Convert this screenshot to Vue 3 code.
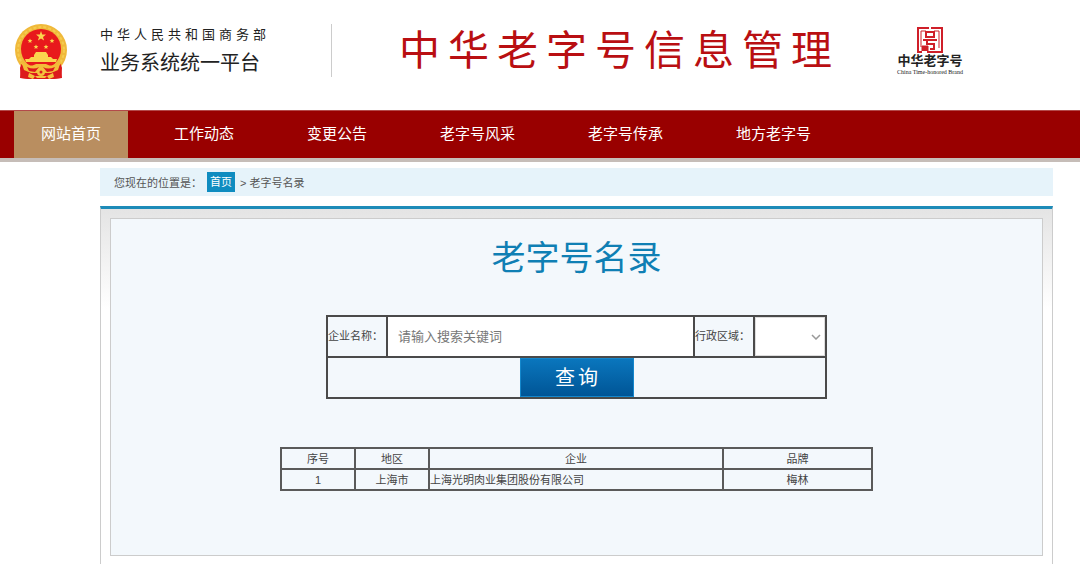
<script setup>
import { ref } from 'vue'

const nav = ['网站首页', '工作动态', '变更公告', '老字号风采', '老字号传承', '地方老字号']
const active = ref(0)
const keyword = ref('')
const region = ref('')
const rows = [{ id: 1, area: '上海市', company: '上海光明肉业集团股份有限公司', brand: '梅林' }]
</script>

<template>
  <div class="page">
    <header class="header">
      <svg class="emblem" viewBox="0 0 52 56" aria-hidden="true">
        <path d="M7 38 L5 44 L6 54 L14 55 L38 55 L46 54 L47 44 L45 38 Z" fill="#dc1a1c" />
        <circle cx="26" cy="26" r="26" fill="#f0b93a" />
        <circle cx="26" cy="26" r="23" fill="none" stroke="#f5cb50" stroke-width="2" stroke-dasharray="3 2" />
        <path d="M6 40 L5 54 L14 55 L38 55 L47 54 L46 40 L38 46 H14 Z" fill="#dc1a1c" />
        <circle cx="26" cy="25" r="20" fill="#e8191c" />
        <path d="M26 7 L27.2 10.5 L31 10.6 L28 12.9 L29.1 16.5 L26 14.4 L22.9 16.5 L24 12.9 L21 10.6 L24.8 10.5 Z" fill="#fbd54e" />
        <g fill="#fbd54e">
          <path id="star" d="M15 14.5 l.7 1.6 1.7.1 -1.3 1.1 .4 1.7 -1.5-.9 -1.5.9 .4-1.7 -1.3-1.1 1.7-.1Z" />
          <use href="#star" x="22" />
          <use href="#star" x="6" y="6" />
          <use href="#star" x="16" y="6" />
          <path d="M19 31 L21 28 H31 L33 31 V33 H36 L38 35 H42 L41 38 H11 L10 35 H14 L16 33 H19 Z" />
        </g>
        <path d="M6 37 C13 43 18 42 21 40 H31 C34 42 39 43 46 37 L43 46 L36 49 H16 L9 46 Z" fill="#f3bd39" />
        <path d="M12 43 Q19 46 24 43 L20 48 L14 47 Z M40 43 Q33 46 28 43 L32 48 L38 47 Z" fill="#dc1a1c" />
        <circle cx="26" cy="48" r="4" fill="#f4c23f" />
        <circle cx="26" cy="48" r="1.5" fill="#dc1a1c" />
        <path d="M14 49 L20 52 L18 55 L13 53 Z M38 49 L32 52 L34 55 L39 53 Z M20 52 H32 L30 54 H22 Z" fill="#f4c23f" />
      </svg>
      <div class="org">
        <span class="org-name">中华人民共和国商务部</span>
        <span class="org-platform">业务系统统一平台</span>
      </div>
      <div class="site-title">中华老字号信息管理</div>
      <div class="brand">
        <svg class="seal" viewBox="0 0 26 26" aria-hidden="true">
          <g fill="none" stroke="#cf1f29" stroke-width="2">
            <path d="M12 1 H1 V25 H5 M14 1 H25 V25 H10" />
            <path d="M9 4 H4 V20 M17 4 H22 V21" stroke-width="1" />
            <path d="M9 5 H17 V10 H9 Z M6 13 H20 M10 13 V17 H17 V22 H13" />
            <path d="M5 24 V19 H11 V24" fill="#cf1f29" stroke-width="1" />
          </g>
        </svg>
        <span class="brand-cn">中华老字号</span>
        <span class="brand-en">China Time-honored Brand</span>
      </div>
    </header>

    <nav class="nav">
      <a v-for="(item, i) in nav" :key="item" href="#" :class="{ active: i === active }" @click.prevent="active = i">{{ item }}</a>
    </nav>

    <main class="main">
      <div class="crumbs">
        <span>您现在的位置是：</span>
        <a href="#">首页</a>
        <span>&gt; 老字号名录</span>
      </div>

      <div class="frame">
        <section class="panel">
          <h1>老字号名录</h1>
          <form class="search" @submit.prevent>
            <label for="company">企业名称：</label>
            <input id="company" v-model="keyword" type="text" placeholder="请输入搜索关键词" />
            <label for="region">行政区域：</label>
            <div class="select-wrap">
              <select id="region" v-model="region">
                <option value=""></option>
                <option value="上海市">上海市</option>
              </select>
              <svg viewBox="0 0 10 6" aria-hidden="true"><path d="M1 1 L5 5 L9 1" fill="none" stroke="#999" stroke-width="1.5" /></svg>
            </div>
            <div class="actions"><button type="submit">查询</button></div>
          </form>

          <table class="results">
            <colgroup><col class="c-id" /><col class="c-area" /><col class="c-company" /><col class="c-brand" /></colgroup>
            <thead>
              <tr><th>序号</th><th>地区</th><th>企业</th><th>品牌</th></tr>
            </thead>
            <tbody>
              <tr v-for="r in rows" :key="r.id">
                <td>{{ r.id }}</td>
                <td>{{ r.area }}</td>
                <td class="left">{{ r.company }}</td>
                <td>{{ r.brand }}</td>
              </tr>
            </tbody>
          </table>
        </section>
      </div>
    </main>
  </div>
</template>

<style>
body {
  margin: 0;
  background: #fff;
}
</style>

<style scoped>
.page {
  font-family: "Liberation Sans", "Noto Sans CJK SC", sans-serif;
  font-size: 11px;
  color: #444;
}
.page * {
  box-sizing: border-box;
}
.header {
  display: flex;
  align-items: flex-start;
  height: 110px;
  padding: 24px 15px 0;
  white-space: nowrap;
}
.emblem {
  width: 52px;
  height: 56px;
  flex: none;
}
.org {
  display: flex;
  flex-direction: column;
  width: 232px;
  height: 53px;
  margin-left: 33px;
  border-right: 1px solid #ccc;
  color: #222;
}
.org-name {
  font-size: 13px;
  line-height: 22px;
  letter-spacing: 4px;
}
.org-platform {
  font-size: 20px;
  line-height: 34px;
}
.site-title {
  margin-left: 67px;
  font-size: 41px;
  line-height: 54px;
  letter-spacing: 8px;
  color: #b90f12;
}
.brand {
  display: flex;
  flex-direction: column;
  align-items: center;
  margin-left: 57px;
  padding-top: 3px;
  color: #222;
}
.seal {
  width: 26px;
  height: 26px;
}
.brand-cn {
  font-size: 13px;
  font-weight: 700;
  line-height: 16px;
}
.brand-en {
  font-family: "Liberation Serif", serif;
  font-size: 6px;
  line-height: 6px;
}
.nav {
  display: flex;
  gap: 19px;
  height: 52px;
  padding: 0 14px;
  background: #900;
  border-top: 1px solid #b34a4a;
  border-bottom: 4px solid #c6bdb8;
}
.nav a {
  padding: 0 27px;
  font-size: 15px;
  line-height: 46px;
  color: #fff;
  text-decoration: none;
  white-space: nowrap;
}
.nav a.active {
  background: #b98e60;
}
.main {
  margin: 6px 27px 0 100px;
}
.crumbs {
  display: flex;
  align-items: center;
  gap: 5px;
  height: 28px;
  padding-left: 14px;
  background: #e6f3fa;
  color: #555;
}
.crumbs a {
  padding: 0 3px;
  line-height: 20px;
  background: #0f8cc0;
  color: #fff;
  text-decoration: none;
}
.frame {
  margin-top: 10px;
  padding: 9px 9px 8px;
  border: 1px solid #ccc;
  border-top: 3px solid #1d8bb8;
  border-bottom: 0;
  background: linear-gradient(#e4e4e4, #fff 100px);
}
.panel {
  display: flex;
  flex-direction: column;
  align-items: center;
  padding: 16px 20px 64px;
  border: 1px solid #ccc;
  background: #f3f8fc;
}
h1 {
  margin: 0;
  font-size: 34px;
  font-weight: 400;
  line-height: 46px;
  color: #0f7fb4;
}
.search {
  display: grid;
  grid-template-columns: 58px 1fr 58px 70px;
  grid-template-rows: 39px 39px;
  gap: 2px;
  width: 100%;
  max-width: 501px;
  margin-top: 34px;
  border: 2px solid #4a4a4a;
  background: #4a4a4a;
}
.search label {
  line-height: 39px;
  background: #f3f8fc;
  white-space: nowrap;
  overflow: hidden;
}
.search input {
  min-width: 0;
  padding: 0 10px;
  border: 0;
  background: #fff;
  font: inherit;
  font-size: 13px;
}
.search input::placeholder {
  color: #777;
}
.select-wrap {
  display: grid;
  align-items: center;
  background: #fff;
}
.select-wrap select,
.select-wrap svg {
  grid-area: 1 / 1;
}
.select-wrap select {
  width: 100%;
  height: 39px;
  border: 1px solid #ddd;
  background: #fff;
  appearance: none;
  font: inherit;
}
.select-wrap svg {
  width: 10px;
  height: 6px;
  margin-right: 4px;
  justify-self: end;
  pointer-events: none;
}
.actions {
  grid-column: 1 / -1;
  display: flex;
  justify-content: center;
  background: #f3f8fc;
}
.actions button {
  width: 114px;
  padding: 0 0 2px 3px;
  border: 1px solid #1487cc;
  background: linear-gradient(#0a76bd, #005596);
  color: #fff;
  font: inherit;
  font-size: 20px;
  letter-spacing: 3px;
}
.results {
  width: 100%;
  max-width: 593px;
  margin-top: 48px;
  border-collapse: collapse;
  table-layout: fixed;
}
.c-id,
.c-area {
  width: 74px;
}
.c-brand {
  width: 149px;
}
.results th,
.results td {
  height: 21px;
  padding: 0;
  border: 2px solid #5a5a5a;
  font-weight: 400;
  line-height: 18px;
  text-align: center;
}
.results .left {
  text-align: left;
}
</style>
